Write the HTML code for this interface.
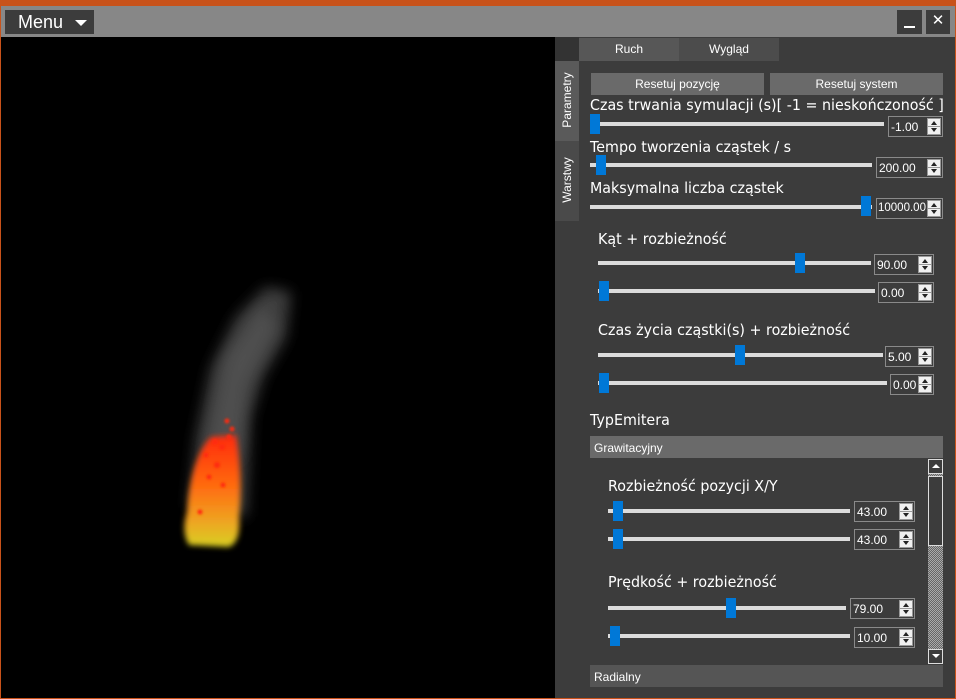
<!DOCTYPE html><html><head><meta charset="utf-8"><style>
body{margin:0;width:956px;height:699px;overflow:hidden;background:#c8521a;font-family:"Liberation Sans",sans-serif;position:relative}
div{position:absolute;box-sizing:border-box}
.t{background:#dcdcdc;height:4px}
.th{background:#0078d7;width:10px;height:20px}
.bx{border:1px solid #8a8a8a;background:#3c3c3c;color:#fff;font-size:12px;height:21px;padding:3px 0 0 2px}
.bx .b{right:1px;top:1px;width:14px;height:17px;background:#f0f0f0;border:1px solid #999}
.bx .b:before{content:"";position:absolute;left:3px;top:2px;border:3px solid transparent;border-bottom:4px solid #222;border-top:0}
.bx .b:after{content:"";position:absolute;left:3px;bottom:2px;border:3px solid transparent;border-top:4px solid #222;border-bottom:0}
.bx .b i{position:absolute;left:0;right:0;top:7px;height:1px;background:#999}
.l{color:#fff;font-family:"DejaVu Sans",sans-serif;font-size:15.5px;white-space:nowrap;transform:scaleX(.92);transform-origin:0 0}
</style></head><body>
<div style="left:1px;top:6px;width:954px;height:31px;background:#878787"></div>
<div style="left:5px;top:10px;width:89px;height:24px;background:#3c3c3c;color:#fff;font-size:18px;padding:2px 0 0 13px">Menu<span style="position:absolute;left:70px;top:10px;border:6px solid transparent;border-top:6px solid #fff;border-bottom:0"></span></div>
<div style="left:897px;top:10px;width:25px;height:24px;background:#3c3c3c"><div style="left:7px;top:16px;width:11px;height:2px;background:#fff"></div></div>
<div style="left:926px;top:10px;width:24px;height:24px;background:#3c3c3c;color:#fff;font-size:15px;text-align:center;line-height:22px">✕</div>
<div style="left:1px;top:37px;width:554px;height:661px;background:#000;overflow:hidden">
<svg width="554" height="661" style="position:absolute;left:0;top:0"><defs><filter id="f" x="-50%" y="-50%" width="200%" height="200%"><feGaussianBlur stdDeviation="7"/></filter><filter id="g"><feGaussianBlur stdDeviation="3"/></filter><filter id="h"><feGaussianBlur stdDeviation="1.2"/></filter><linearGradient id="fl" x1="0" y1="0" x2="0" y2="1"><stop offset="0" stop-color="#ff2a10"/><stop offset=".45" stop-color="#ff6a10"/><stop offset=".75" stop-color="#f0a020"/><stop offset="1" stop-color="#d8d020"/></linearGradient></defs>
<path d="M188 470 L195 400 L210 330 L235 280 L265 250 L290 255 L285 300 L262 340 L250 380 L245 480 Z" fill="#4a4a4a" opacity=".85" filter="url(#f)"/>
<path d="M205 420 L225 320 L262 268 L275 290 L245 350 L238 420 Z" fill="#5a5a5a" opacity=".6" filter="url(#f)"/>
<path d="M186 475 Q190 420 210 400 L235 398 Q242 440 238 480 Q240 505 228 510 L188 508 Q180 495 186 475Z" fill="url(#fl)" filter="url(#g)"/>
<g fill="#ff2a10" filter="url(#h)"><circle cx="226" cy="384" r="2.5"/><circle cx="231" cy="392" r="2.5"/><circle cx="214" cy="405" r="3"/><circle cx="221" cy="410" r="3"/><circle cx="228" cy="400" r="2.5"/><circle cx="205" cy="418" r="2.5"/><circle cx="216" cy="428" r="3"/><circle cx="199" cy="475" r="2.5"/><circle cx="222" cy="448" r="2.5"/><circle cx="208" cy="440" r="2.5"/></g>
</svg></div>
<div style="left:555px;top:37px;width:400px;height:661px;background:#3c3c3c"></div>
<div style="left:555px;top:37px;width:24px;height:24px;background:#333"></div>
<div style="left:579px;top:38px;width:100px;height:23px;background:#575757;color:#fff;font-size:12px;text-align:center;line-height:23px">Ruch</div>
<div style="left:679px;top:38px;width:100px;height:23px;background:#4c4c4c;color:#fff;font-size:12px;text-align:center;line-height:23px">Wygląd</div>
<div style="left:555px;top:61px;width:24px;height:80px;background:#5a5a5a"><span style="position:absolute;left:-28px;top:32px;width:80px;transform:rotate(-90deg);color:#fff;font-size:12px;text-align:center">Parametry</span></div>
<div style="left:555px;top:141px;width:24px;height:80px;background:#4a4a4a"><span style="position:absolute;left:-28px;top:32px;width:80px;transform:rotate(-90deg);color:#fff;font-size:12px;text-align:center">Warstwy</span></div>
<div style="left:591px;top:73px;width:173px;height:22px;background:#6a6a6a;color:#fff;font-size:12px;text-align:center;line-height:22px">Resetuj pozycję</div>
<div style="left:770px;top:73px;width:173px;height:22px;background:#6a6a6a;color:#fff;font-size:12px;text-align:center;line-height:22px">Resetuj system</div>

<div class="l" style="left:590px;top:96px">Czas trwania symulacji (s)[ -1 = nieskończoność ]</div>
<div class="t" style="left:590px;top:122px;width:294px"></div><div class="th" style="left:590px;top:114px"></div>
<div class="bx" style="left:888px;top:116px;width:55px">-1.00<div class="b"><i></i></div></div>

<div class="l" style="left:590px;top:138px">Tempo tworzenia cząstek / s</div>
<div class="t" style="left:590px;top:163px;width:282px"></div><div class="th" style="left:596px;top:155px"></div>
<div class="bx" style="left:876px;top:157px;width:67px">200.00<div class="b"><i></i></div></div>

<div class="l" style="left:590px;top:179px">Maksymalna liczba cząstek</div>
<div class="t" style="left:590px;top:205px;width:282px"></div><div class="th" style="left:861px;top:196px"></div>
<div class="bx" style="left:876px;top:198px;width:67px;font-size:11.5px;padding-left:1px">10000.00<div class="b"><i></i></div></div>

<div class="l" style="left:598px;top:230px">Kąt + rozbieżność</div>
<div class="t" style="left:598px;top:261px;width:273px"></div><div class="th" style="left:795px;top:253px"></div>
<div class="bx" style="left:874px;top:254px;width:60px">90.00<div class="b"><i></i></div></div>
<div class="t" style="left:598px;top:289px;width:277px"></div><div class="th" style="left:599px;top:281px"></div>
<div class="bx" style="left:878px;top:282px;width:56px">0.00<div class="b"><i></i></div></div>

<div class="l" style="left:598px;top:321px">Czas życia cząstki(s) + rozbieżność</div>
<div class="t" style="left:598px;top:353px;width:285px"></div><div class="th" style="left:735px;top:345px"></div>
<div class="bx" style="left:885px;top:346px;width:49px">5.00<div class="b"><i></i></div></div>
<div class="t" style="left:598px;top:381px;width:289px"></div><div class="th" style="left:599px;top:373px"></div>
<div class="bx" style="left:890px;top:374px;width:44px">0.00<div class="b"><i></i></div></div>

<div class="l" style="left:590px;top:411px">TypEmitera</div>
<div style="left:590px;top:436px;width:353px;height:22px;background:#6a6a6a;color:#fff;font-size:12px;padding:5px 0 0 4px">Grawitacyjny</div>
<div style="left:928px;top:459px;width:15px;height:205px;background:repeating-conic-gradient(#aaa 0 25%,#666 0 50%) 0 0/2px 2px"></div>
<div style="left:928px;top:459px;width:15px;height:15px;background:#3c3c3c;border:1px solid #ddd"><div style="left:3px;top:4px;border:4px solid transparent;border-bottom:4px solid #fff;border-top:0"></div></div>
<div style="left:928px;top:476px;width:15px;height:70px;background:#3c3c3c;border:1px solid #ddd"></div>
<div style="left:928px;top:649px;width:15px;height:15px;background:#3c3c3c;border:1px solid #ddd"><div style="left:3px;top:4px;border:4px solid transparent;border-top:4px solid #fff;border-bottom:0"></div></div>

<div class="l" style="left:608px;top:477px">Rozbieżność pozycji X/Y</div>
<div class="t" style="left:608px;top:509px;width:242px"></div><div class="th" style="left:613px;top:501px"></div>
<div class="bx" style="left:854px;top:501px;width:61px">43.00<div class="b"><i></i></div></div>
<div class="t" style="left:608px;top:537px;width:242px"></div><div class="th" style="left:613px;top:529px"></div>
<div class="bx" style="left:854px;top:529px;width:61px">43.00<div class="b"><i></i></div></div>

<div class="l" style="left:608px;top:573px">Prędkość + rozbieżność</div>
<div class="t" style="left:608px;top:606px;width:238px"></div><div class="th" style="left:726px;top:598px"></div>
<div class="bx" style="left:850px;top:598px;width:65px">79.00<div class="b"><i></i></div></div>
<div class="t" style="left:608px;top:634px;width:242px"></div><div class="th" style="left:610px;top:626px"></div>
<div class="bx" style="left:854px;top:627px;width:61px">10.00<div class="b"><i></i></div></div>

<div style="left:590px;top:665px;width:353px;height:22px;background:#555;color:#fff;font-size:12px;padding:5px 0 0 4px">Radialny</div>
</body></html>
